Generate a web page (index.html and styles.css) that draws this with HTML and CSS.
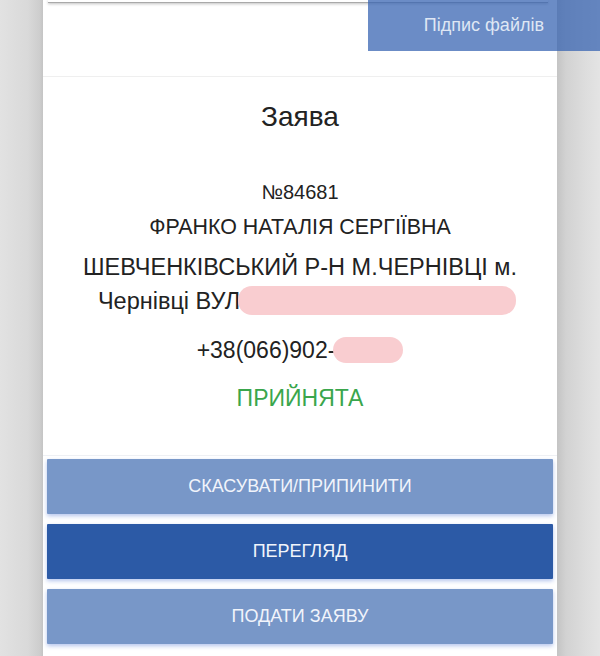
FILE: index.html
```html
<!DOCTYPE html>
<html lang="uk">
<head>
<meta charset="utf-8">
<title>Заява</title>
<link rel="stylesheet" href="styles.css">
</head>
<body>
<div class="sheet">
  <div class="prev-card"></div>
  <div class="card">
    <h1 class="title">Заява</h1>
    <div class="number">№84681</div>
    <div class="name">ФРАНКО НАТАЛІЯ СЕРГІЇВНА</div>
    <div class="address">ШЕВЧЕНКІВСЬКИЙ Р-Н М.ЧЕРНІВЦІ м.<br>Чернівці ВУЛ<span class="redact redact-addr"></span></div>
    <div class="phone">+38(066)902-<span class="redact redact-phone"></span></div>
    <div class="status">ПРИЙНЯТА</div>
  </div>
  <div class="actions">
    <button class="btn btn-light">СКАСУВАТИ/ПРИПИНИТИ</button>
    <button class="btn btn-dark">ПЕРЕГЛЯД</button>
    <button class="btn btn-light">ПОДАТИ ЗАЯВУ</button>
  </div>
</div>
<div class="sign-tab">Підпис файлів</div>
</body>
</html>
```
FILE: styles.css
```css
html, body {
  margin: 0;
  padding: 0;
}
body {
  width: 600px;
  height: 656px;
  overflow: hidden;
  position: relative;
  font-family: "Liberation Sans", Arial, sans-serif;
  color: #222;
  background: linear-gradient(to right, #e2e2e2 0px, #d9d9d9 28px, #cdcdcd 40px, #c4c4c4 43px, #c4c4c4 557px, #d2d2d2 566px, #dddddd 585px, #e4e4e4 600px);
}
.sheet {
  margin: 0 43px;
  width: 514px;
  height: 656px;
  background: #fff;
  display: flex;
  flex-direction: column;
}
.prev-card {
  height: 2px;
  margin: 0 9px 0 5px;
  border-bottom: 1px solid #a9a9a9;
  box-shadow: 0 1px 3px rgba(0,0,0,0.25);
}
.card {
  margin-top: 73px;
  border-top: 1px solid #efefef;
  border-bottom: 1px solid #eef0f4;
  padding: 23px 0 40px;
  text-align: center;
  display: flex;
  flex-direction: column;
  align-items: center;
}
.title {
  margin: 0;
  font-size: 28px;
  font-weight: normal;
  line-height: 34px;
  color: #222;
}
.number {
  margin-top: 43px;
  font-size: 20px;
  line-height: 30px;
}
.name {
  margin-top: 2px;
  font-size: 21.4px;
  line-height: 36px;
}
.address {
  margin-top: 5px;
  font-size: 23.5px;
  line-height: 34px;
}
.phone {
  margin-top: 15px;
  font-size: 23px;
  line-height: 34px;
}
.redact {
  display: inline-block;
  vertical-align: middle;
  background: #f9cdd0;
  border-radius: 14px;
}
.redact-addr {
  width: 278px;
  height: 29px;
  margin-left: -2px;
  margin-right: -14px;
  margin-top: -4px;
}
.phone .redact-phone {
  width: 70px;
  height: 26px;
  margin-left: -2px;
  margin-top: -4px;
  border-radius: 13px;
}
.status {
  margin-top: 14px;
  font-size: 23px;
  line-height: 34px;
  color: #3aa64c;
}
.actions {
  margin: 3px 4px 0;
  display: flex;
  flex-direction: column;
  gap: 10px;
}
.btn {
  height: 55px;
  border: none;
  border-radius: 1px;
  font-family: "Liberation Sans", Arial, sans-serif;
  font-size: 18px;
  color: #f1f4fb;
  box-shadow: 0 2px 4px rgba(70, 110, 210, 0.4);
  padding: 0;
}
.btn-light {
  background: #7897c8;
}
.btn-dark {
  background: #2c5aa6;
}
.sign-tab {
  position: absolute;
  top: 0;
  left: 368px;
  width: 176px;
  height: 51px;
  padding-right: 56px;
  background: rgba(52, 97, 177, 0.73);
  color: #dfe7f4;
  font-size: 18px;
  line-height: 51px;
  text-align: right;
}
```
